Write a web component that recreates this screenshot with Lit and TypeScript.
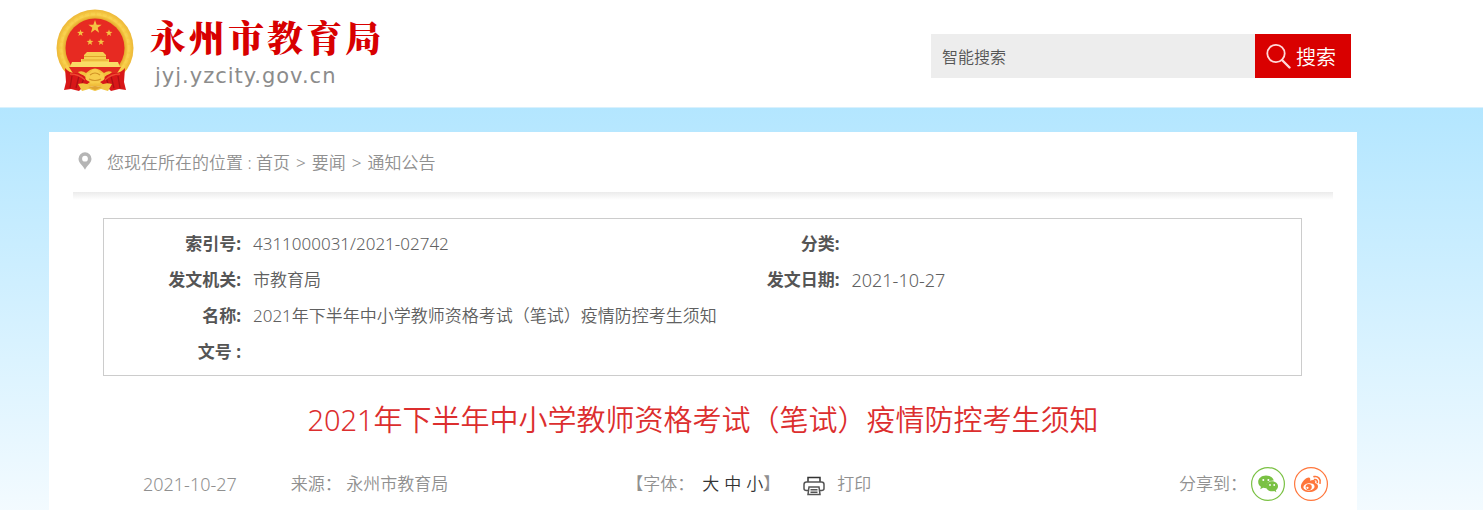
import { LitElement, html, css, svg } from "lit";
import { customElement, property } from "lit/decorators.js";

const star = (cx: number, cy: number, r: number) => {
  const pts: string[] = [];
  for (let i = 0; i < 10; i++) {
    const a = -Math.PI / 2 + (i * Math.PI) / 5;
    const q = i % 2 ? r * 0.4 : r;
    pts.push(`${(cx + q * Math.cos(a)).toFixed(2)},${(cy + q * Math.sin(a)).toFixed(2)}`);
  }
  return svg`<polygon points=${pts.join(" ")} fill="#f5c243"/>`;
};

@customElement("site-header")
class SiteHeader extends LitElement {
  static styles = css`
    :host { display: block; background: #fff; border-bottom: 1px solid #d9f1fd; }
    .bar { display: flex; justify-content: space-between; align-items: center; height: 107px; box-sizing: border-box; padding: 0 132px 0 56px; }
    .brand { display: flex; align-items: center; gap: 16px; color: inherit; text-decoration: none; padding-bottom: 6px; }
    .emblem { display: block; width: 78px; height: 83px; }
    .names { display: flex; flex-direction: column; }
    .name { font: 900 36px/48px "Noto Serif CJK SC", "Noto Sans CJK SC", serif; color: #d80000; letter-spacing: 3px; }
    .domain { font: 21px/26px "DejaVu Sans", sans-serif; color: #8c8c8c; padding: 2px 0 0 5px; letter-spacing: 1px; }
    .search { display: flex; width: 420px; height: 44px; margin-top: 5px; }
    .box { flex: 1; min-width: 0; border: 0; border-radius: 0; outline: 0; background: #ededed; padding: 0 11px; font: 350 16px "Noto Sans CJK SC", sans-serif; color: #555; }
    .box::placeholder { color: #555; opacity: 1; }
    .go { display: flex; align-items: center; gap: 5px; width: 96px; border: 0; padding: 0 0 0 11px; background: #d90000; color: #fff; font: 350 20px "Noto Sans CJK SC", sans-serif; }
    .lens { width: 25px; height: 26px; }
  `;
  render() {
    return html`<header class="bar">
      <a class="brand" href="#">
        <svg class="emblem" viewBox="0 0 78 83" aria-hidden="true">
          <defs>
            <radialGradient id="gold"><stop offset=".76" stop-color="#e3a62c"/><stop offset=".86" stop-color="#f9cf49"/><stop offset="1" stop-color="#edb838"/></radialGradient>
          </defs>
          <circle cx="39" cy="39" r="38.5" fill="url(#gold)"/>
          <circle cx="39" cy="39" r="34" fill="none" stroke="#fbdf69" stroke-width="3" stroke-dasharray="4 2" opacity=".25"/>
          <circle cx="39" cy="39" r="29.5" fill="#e72a22"/>
          ${star(39, 18, 7)}${star(24.5, 24, 3.6)}${star(53, 24, 3.6)}${star(34, 33, 3.6)}${star(45, 33, 3.6)}
          <path d="M28 46l3-3h16l3 3v4h3v4H25v-4h3z" fill="#f7cf51"/>
          <path d="M28 47.5h22M26 51h26" stroke="#dfa42c" stroke-width="1"/>
          <path d="M16 53h46l2 5H14z" fill="#fadc65"/>
          <path d="M13 58h52l-5 8H18z" fill="#e02a1e"/>
          <path d="M22 63q4-2 8 1l4-3q5-3 10 0l4 3q4-3 8-1l-6 6H28z" fill="#f1bf3d"/>
          <path d="M9 59q4 5 10 5 9 0 15 9l-7 5-4 4-8-2-7 1 2-8zM69 59q-4 5-10 5-9 0-15 9l7 5 4 4 8-2 7 1-2-8z" fill="#d81718"/>
          <path d="M16 67l-2 12M23 67l-3 12M28 69l-3 8M62 67l2 12M55 67l3 12M50 69l3 8" stroke="#ad1014" stroke-width="1.3"/>
          <path d="M14 65q9 0 15 6M64 65q-9 0-15 6" stroke="#ef4a32" stroke-width="1.3" fill="none"/>
          <path d="M30 67q1-4 4-3 2-4 5-4t5 4q3-1 4 3 2 3-2 5-3 2-7 2t-7-2q-4-2-2-5z" fill="#f7cc4c"/>
          <path d="M34 66q5-4 10 0M33 70q6 3 12 0" fill="none" stroke="#d29427" stroke-width="1.2"/>
          <path d="M22 75q8-2 12 2 5 2 10 0 4-4 12-2l-4 7-7-2-6 2-6-2-7 2z" fill="#f2c643"/>
          <path d="M32 78l7-1 7 1-7 3z" fill="#e0a432"/>
        </svg>
        <span class="names"><span class="name">永州市教育局</span><span class="domain">jyj.yzcity.gov.cn</span></span>
      </a>
      <form class="search" @submit=${(e: Event) => e.preventDefault()}>
        <input class="box" type="text" placeholder="智能搜索" aria-label="智能搜索">
        <button class="go"><svg class="lens" viewBox="0 0 25 26" fill="none" stroke="#ffd9d9" aria-hidden="true"><circle cx="10" cy="10.5" r="8.7" stroke-width="1.8"/><path d="M16 17l7.5 7.5" stroke-width="2.4" stroke-linecap="round"/></svg>搜索</button>
      </form>
    </header>`;
  }
}

@customElement("crumb-trail")
class CrumbTrail extends LitElement {
  @property({ attribute: false }) items: string[] = [];
  static styles = css`
    :host { display: block; padding: 0 24px; }
    .trail { display: flex; align-items: center; height: 60px; padding: 2px 5px 0; box-sizing: border-box; line-height: 24px; color: #909090; white-space: pre; }
    .pin { width: 14px; height: 18px; margin-right: 15px; margin-bottom: 4px; }
    .link { color: inherit; text-decoration: none; }
    .sep { padding: 0 6px; }
    .shade { height: 8px; background: linear-gradient(#ebebeb, #fff); }
  `;
  render() {
    return html`<nav class="trail"><svg class="pin" viewBox="0 0 14 18" aria-hidden="true"><path fill-rule="evenodd" fill="#b5b5b5" d="M7 .3a6.500 6.500 0 0 1 6.500 6.500C13.500 11 9 13.500 7 17.700 5 13.500.5 11 .5 6.800A6.500 6.500 0 0 1 7 .3zM7 3.800a2.900 2.900 0 1 0 0 5.800 2.900 2.900 0 0 0 0-5.800z"/></svg>您现在所在的位置 : ${this.items.map((t, i) => html`${i ? html`<span class="sep">&gt;</span>` : ""}<a class="link" href="#">${t}</a>`)}</nav>
      <div class="shade"></div>`;
  }
}

@customElement("record-table")
class RecordTable extends LitElement {
  static styles = css`
    :host { display: block; margin: 18px 55px 0 54px; border: 1px solid #ccc; padding: 7px 0 5px; }
    .grid { width: 100%; table-layout: fixed; border-collapse: collapse; line-height: 36px; }
    .label { width: 149px; padding: 0 12px 0 0; text-align: right; font-weight: 700; color: #555; box-sizing: border-box; white-space: nowrap; }
    .value { padding: 0; color: #606060; }
    .date { font-size: 18px; }
  `;
  render() {
    return html`<table class="grid">
      <tr><th class="label">索引号:</th><td class="value">4311000031/2021-02742</td><th class="label">分类:</th><td class="value"></td></tr>
      <tr><th class="label">发文机关:</th><td class="value">市教育局</td><th class="label">发文日期:</th><td class="value date">2021-10-27</td></tr>
      <tr><th class="label">名称:</th><td class="value" colspan="3">2021年下半年中小学教师资格考试（笔试）疫情防控考生须知</td></tr>
      <tr><th class="label">文号 :</th><td class="value" colspan="3"></td></tr>
    </table>`;
  }
}

@customElement("article-meta")
class ArticleMeta extends LitElement {
  static styles = css`
    :host { display: flex; align-items: center; height: 36px; padding: 0 29px 0 94px; color: #909090; white-space: nowrap; }
    .date { font-size: 18px; }
    .origin { margin-left: 54px; }
    .sizes { display: flex; margin-left: 178px; }
    .size, .print { border: 0; background: none; padding: 0; font: inherit; }
    .size { color: #333; margin-left: 5px; }
    .first { margin-left: 8px; }
    .print { display: flex; align-items: center; gap: 12px; color: #909090; margin-left: 23px; }
    .printer { width: 22px; height: 20px; margin-top: 4px; }
    .share { display: flex; align-items: center; gap: 4px; margin-left: auto; }
    .icons { display: flex; gap: 9px; }
    .round { display: block; width: 34px; height: 34px; }
    .round svg { display: block; }
  `;
  render() {
    return html`<time class="date">2021-10-27</time>
      <span class="origin">来源： 永州市教育局</span>
      <span class="sizes">【字体：<button class="size first">大</button><button class="size">中</button><button class="size">小</button>】</span>
      <button class="print"><svg class="printer" viewBox="0 0 22 20" fill="none" stroke="#555" stroke-width="1.5" aria-hidden="true"><path d="M5 6V1.500h12V6" stroke="#333"/><path d="M5 14.500H3.500Q1 14.500 1 12.500V8.500Q1 6 3.500 6h15Q21 6 21 8.500v4q0 2-2.500 2H17"/><path d="M6 11h10l1 7.500H5z" fill="#fff"/><path d="M7.500 13.800h7M7.500 16.200h7"/></svg>打印</button>
      <span class="share"><span>分享到：</span><span class="icons">
        <a class="round" href="#" aria-label="微信"><svg viewBox="0 0 34 34"><circle cx="17" cy="17" r="16.400" fill="#fff" stroke="#7ac143" stroke-width="1.200"/><path fill="#7ac143" d="M15 8.500c-4.500 0-7.800 2.900-7.800 6.400 0 2 1.100 3.700 2.800 4.900l-.8 2.500 2.900-1.500c1 .3 2 .4 3.100.4-.8-4.500 3-7.900 7.600-7.700C22 10.700 19 8.500 15 8.500z"/><path fill="#7ac143" d="M21 14.200c3.500 0 6 2.300 6 5.100 0 1.600-.9 3-2.200 4l.6 2-2.200-1.200c-4 1-8.400-1.200-8.400-4.800 0-2.800 2.700-5.100 6.200-5.100z"/><g fill="#fff"><circle cx="12.300" cy="13" r="1"/><circle cx="17.400" cy="13" r="1"/><circle cx="19" cy="18" r=".9"/><circle cx="23.200" cy="18" r=".9"/></g></svg></a>
        <a class="round" href="#" aria-label="微博"><svg viewBox="0 0 34 34"><circle cx="17" cy="17" r="16.400" fill="#fff" stroke="#ff763b" stroke-width="1.200"/><path fill="#ff763b" d="M15.500 10.700c1 .7.9 2 .5 3 2.200-.8 5-1.100 5.300.7.100.6-.1 1.100-.3 1.600 2 .6 3.200 1.800 3 3.700-.4 3.200-4.500 5.300-8.700 5.300-4.600 0-8.400-2.200-8.400-5.600 0-4 5.800-9.700 8.600-8.700z"/><ellipse cx="15" cy="19.800" rx="5.600" ry="3.600" fill="#fff" transform="rotate(-6 15 20)"/><circle cx="14.700" cy="20" r="3.100" fill="#ff763b"/><circle cx="13.500" cy="20.800" r="1.100" fill="#fff"/><path fill="none" stroke="#ff763b" stroke-width="1.600" stroke-linecap="round" d="M20 9.600c4.200-.8 7.200 2.600 6 6.600M20.500 12.500c2-.3 3.300 1.200 2.800 3"/></svg></a>
      </span></span>`;
  }
}

@customElement("app-root")
class AppRoot extends LitElement {
  static styles = css`
    :host { display: block; min-height: 100vh; font: 350 17px/24px "Noto Sans", "Noto Sans CJK SC", sans-serif; background: linear-gradient(#b3e6ff, #f4fbff 410px, #fff 480px) 0 107px no-repeat; overflow: hidden; }
    .page { padding: 24px 126px 0 49px; }
    .card { display: block; background: #fff; min-height: calc(100vh - 132px); }
    .title { margin: 25px 0 27px; text-align: center; font-size: 29px; line-height: 38px; font-weight: 350; color: #dc2e2e; }
  `;
  render() {
    return html`<site-header></site-header>
      <div class="page"><main class="card">
        <crumb-trail .items=${["首页", "要闻", "通知公告"]}></crumb-trail>
        <record-table></record-table>
        <h1 class="title">2021年下半年中小学教师资格考试（笔试）疫情防控考生须知</h1>
        <article-meta></article-meta>
      </main></div>`;
  }
}
